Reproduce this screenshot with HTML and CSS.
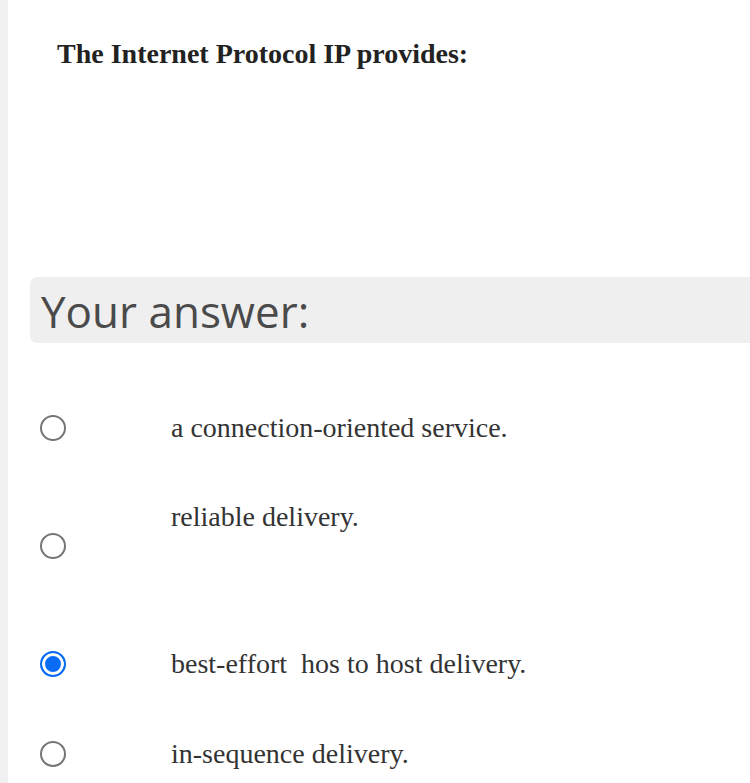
FILE: index.html
```html
<!DOCTYPE html>
<html>
<head>
<meta charset="utf-8">
<link rel="stylesheet" href="styles.css">
</head>
<body>
<div class="page">
  <h1 class="question">The Internet Protocol IP provides:</h1>
  <div class="answer-head">Your answer:</div>
  <div class="options">
    <div class="option">
      <span class="radio"></span>
      <span class="label">a connection-oriented service.</span>
    </div>
    <div class="option option-tall">
      <span class="radio"></span>
      <span class="label label-top">reliable delivery.</span>
    </div>
    <div class="option">
      <span class="radio checked"></span>
      <span class="label">best-effort&nbsp; hos to host delivery.</span>
    </div>
    <div class="option">
      <span class="radio"></span>
      <span class="label">in-sequence delivery.</span>
    </div>
  </div>
</div>
</body>
</html>
```

FILE: styles.css
```css
html, body {
  margin: 0;
  padding: 0;
  background: #ffffff;
}
body {
  width: 750px;
  height: 783px;
  overflow: hidden;
}
.page {
  border-left: 8px solid #f1f1f1;
  height: 783px;
  box-sizing: border-box;
  padding-left: 22px;
}
.question {
  margin: 0;
  padding: 37px 0 0 27px;
  height: 277px;
  box-sizing: border-box;
  font-family: "Liberation Serif", "Times New Roman", serif;
  font-weight: bold;
  font-size: 28px;
  line-height: 34px;
  color: #222222;
}
.answer-head {
  background: #efefef;
  border-radius: 7px 0 0 7px;
  height: 66px;
  margin-right: -10px;
  padding-left: 11px;
  box-sizing: border-box;
  font-family: "Open Sans", sans-serif;
  font-size: 44px;
  line-height: 68px;
  color: #4a4a4a;
}
.options {
  display: flex;
  flex-direction: column;
  padding-top: 40px;
}
.option {
  display: grid;
  grid-template-columns: 141px 1fr;
  align-items: center;
  height: 90px;
  font-family: "Liberation Serif", "Times New Roman", serif;
  font-size: 28px;
  line-height: 32px;
  color: #333333;
}
.option-tall {
  height: 146px;
}
.label-top {
  align-self: start;
  margin-top: 28px;
}
.radio {
  width: 26px;
  height: 26px;
  margin-left: 10px;
  border: 2px solid #767676;
  border-radius: 50%;
  box-sizing: border-box;
}
.radio.checked {
  border: 2px solid #0a6cf5;
  background: #0a6cf5;
  box-shadow: inset 0 0 0 3px #ffffff;
}
```
